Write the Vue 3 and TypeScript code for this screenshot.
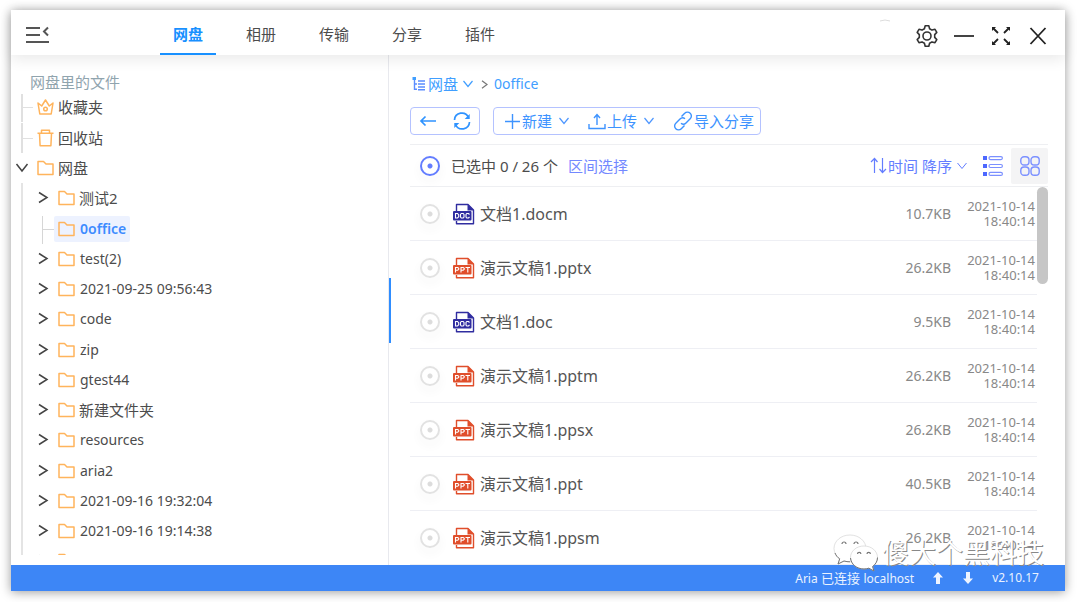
<script setup lang="ts">
import { ref } from 'vue'

interface FolderNode {
  name: string
  cjk?: boolean
  leaf?: boolean
}

interface FileItem {
  name: string
  type: 'DOC' | 'PPT'
  size: string
}

const tabs = ['网盘', '相册', '传输', '分享', '插件']
const activeTab = ref('网盘')
const activeFolder = ref('0office')

const folders: FolderNode[] = [
  { name: '测试2', cjk: true },
  { name: '0office', leaf: true },
  { name: 'test(2)' },
  { name: '2021-09-25 09:56:43' },
  { name: 'code' },
  { name: 'zip' },
  { name: 'gtest44' },
  { name: '新建文件夹', cjk: true },
  { name: 'resources' },
  { name: 'aria2' },
  { name: '2021-09-16 19:32:04' },
  { name: '2021-09-16 19:14:38' },
  { name: '' },
]

const files: FileItem[] = [
  { name: '文档1.docm', type: 'DOC', size: '10.7KB' },
  { name: '演示文稿1.pptx', type: 'PPT', size: '26.2KB' },
  { name: '文档1.doc', type: 'DOC', size: '9.5KB' },
  { name: '演示文稿1.pptm', type: 'PPT', size: '26.2KB' },
  { name: '演示文稿1.ppsx', type: 'PPT', size: '26.2KB' },
  { name: '演示文稿1.ppt', type: 'PPT', size: '40.5KB' },
  { name: '演示文稿1.ppsm', type: 'PPT', size: '26.2KB' },
]
</script>

<template>
  <div class="page">
    <div class="window">
      <header class="header">
        <button class="menu" aria-label="折叠菜单">
          <svg width="24" height="18" viewBox="0 0 24 18" fill="none" stroke="#555" stroke-width="2">
            <path d="M0 2h14M0 9h14M0 16h23" /><path d="M22 1.500l-4 4 4 4" />
          </svg>
        </button>
        <nav class="tabs">
          <button
            v-for="t in tabs" :key="t" class="tab" :class="{ active: t === activeTab }"
            @click="activeTab = t"
          >{{ t }}</button>
        </nav>
        <div class="controls">
          <svg class="speck" width="10" height="3" viewBox="0 0 10 3" fill="none" stroke="#ddd"><path d="M0 2Q5 0 10 2" /></svg>
          <button aria-label="设置">
            <svg width="24" height="24" viewBox="0 0 24 24" fill="none" stroke="#333" stroke-width="1.6" stroke-linejoin="round">
              <path d="M10.2 1.8h3.6l.8 2.9 2.4 1.4 3-.8 1.8 3.1-2.1 2.2v2.8l2.1 2.2-1.8 3.1-3-.8-2.4 1.4-.8 2.9h-3.6l-.8-2.9L7 17.9l-3 .8-1.8-3.1 2.1-2.2v-2.8L2.2 8.4 4 5.3l3 .8 2.4-1.4z" />
              <circle cx="12" cy="12" r="4" />
            </svg>
          </button>
          <button aria-label="最小化">
            <svg width="20" height="20" viewBox="0 0 20 20" stroke="#444" stroke-width="2"><path d="M0 10h20" /></svg>
          </button>
          <button aria-label="最大化">
            <svg width="20" height="20" viewBox="0 0 20 20" fill="none" stroke="#222" stroke-width="1.8">
              <path d="M2 2l5 5M18 2l-5 5M2 18l5-5M18 18l-5-5" />
              <path d="M1 1h4L1 5zM19 1h-4l4 4zM1 19h4l-4-4zM19 19h-4l4-4z" fill="#222" stroke="none" />
            </svg>
          </button>
          <button aria-label="关闭">
            <svg width="18" height="18" viewBox="0 0 18 18" stroke="#222" stroke-width="1.8"><path d="M1.5 1l15 16M16.5 1l-15 16" /></svg>
          </button>
        </div>
      </header>

      <div class="body">
        <aside class="sidebar">
          <h2 class="caption">网盘里的文件</h2>
          <ul class="tree">
            <li class="node">
              <svg class="branch" width="22" height="30" viewBox="0 0 22 30"><path d="M10 2h2v28h-2zM12 15h10v1H12z" fill="#e0e0e0" /></svg>
              <button class="label cjk">
                <svg width="17" height="18" viewBox="0 0 17 18" fill="none" stroke="#ffb45c" stroke-width="1.500" stroke-linejoin="round">
                  <path d="M1 5l1.800 11h11.400L16 5l-3.700 3L8.500 2 4.700 8z" /><circle cx="8.500" cy="11" r="1.800" />
                </svg>收藏夹
              </button>
            </li>
            <li class="node">
              <svg class="branch" width="22" height="30" viewBox="0 0 22 30"><path d="M10 0h2v30h-2zM12 15h10v1H12z" fill="#e0e0e0" /></svg>
              <button class="label cjk">
                <svg width="17" height="18" viewBox="0 0 17 18" fill="none" stroke="#ffb45c" stroke-width="1.500" stroke-linejoin="round">
                  <path d="M.5 4.200h16M4.500 4V1.200h8V4M2.500 4.500l.6 12.300h10.800l.6-12.300" />
                </svg>回收站
              </button>
            </li>
            <li class="node">
              <button class="toggle" aria-label="折叠">
                <svg width="14" height="12" viewBox="0 0 14 12" fill="none" stroke="#444" stroke-width="1.500"><path d="M1.500 2L7 9l5.500-7" /></svg>
              </button>
              <button class="label cjk">
                <svg width="17" height="18" viewBox="0 0 17 18" fill="none" stroke="#ffb45c" stroke-width="1.500" stroke-linejoin="round"><path d="M1 2.500h5.500L9 5h7v10.500H1z" /></svg>网盘
              </button>
            </li>
          </ul>
          <ul class="tree children">
            <li v-for="f in folders" :key="f.name" class="node">
              <svg v-if="f.leaf" class="branch" width="22" height="30" viewBox="0 0 22 30"><path d="M10 2h1v28h-1zM11 15h11v1H11z" fill="#d6d6d6" /></svg>
              <button v-else class="toggle" aria-label="展开">
                <svg width="12" height="14" viewBox="0 0 12 14" fill="none" stroke="#444" stroke-width="1.500"><path d="M2 1.500L10 6.500l-8 5" /></svg>
              </button>
              <button
                class="label" :class="{ cjk: f.cjk, selected: f.name === activeFolder }"
                @click="activeFolder = f.name"
              >
                <svg width="17" height="18" viewBox="0 0 17 18" fill="none" stroke="#ffb45c" stroke-width="1.500" stroke-linejoin="round"><path d="M1 2.500h5.500L9 5h7v10.500H1z" /></svg>{{ f.name }}
              </button>
            </li>
          </ul>
        </aside>
        <div class="splitter"><span class="grip"></span></div>

        <main class="content">
          <nav class="crumbs">
            <button class="crumb">
              <svg width="14" height="14" viewBox="0 0 14 14" fill="none" stroke="#5b8cff" stroke-width="1.400">
                <path d="M2.500 2v10.300H5M2.500 7H5M6 4h7M6 7h7M6 10h7M6 12.700h7" /><path d="M.5 0h3.500v3H.5z" fill="#409eff" stroke="none" />
              </svg>
              网盘
              <svg class="caret" width="10" height="8" viewBox="0 0 10 8" fill="none" stroke="#409eff" stroke-width="1.200"><path d="M.5 1L5 6.500 9.500 1" /></svg>
            </button>
            <svg width="7" height="9" viewBox="0 0 7 9" fill="none" stroke="#777" stroke-width="1.200"><path d="M1 .8l5 3.700-5 3.700" /></svg>
            <a class="last" href="#">0office</a>
          </nav>

          <div class="toolbar">
            <div class="group nav">
              <button aria-label="返回">
                <svg width="18" height="18" viewBox="0 0 18 18" fill="none" stroke="#2f93ff" stroke-width="1.700"><path d="M17 9H2M6.500 4.500L2 9l4.500 4.500" /></svg>
              </button>
              <button aria-label="刷新">
                <svg width="18" height="18" viewBox="0 0 18 18" fill="none" stroke="#2f93ff" stroke-width="1.700">
                  <path d="M1.500 8A7.300 7.300 0 0 1 15.500 5.500M16.500 10A7.300 7.300 0 0 1 2.500 12.500" />
                  <path d="M16.700 2v5h-5zM1.300 16v-5h5z" fill="#2f93ff" stroke="none" />
                </svg>
              </button>
            </div>
            <div class="group actions">
              <button>
                <svg width="17" height="17" viewBox="0 0 17 17" stroke="#3d93ff" stroke-width="1.400"><path d="M8.500 1v15M1 8.500h15" /></svg>新建
                <svg class="caret" width="10" height="8" viewBox="0 0 10 8" fill="none" stroke="#4d96ff" stroke-width="1.200"><path d="M.5 1L5 6.500 9.500 1" /></svg>
              </button>
              <button>
                <svg width="18" height="17" viewBox="0 0 18 17" fill="none" stroke="#3d93ff" stroke-width="1.400"><path d="M1 11v4.500h16V11M9 12V2.500M6 5l3-3.500L12 5" /></svg>上传
                <svg class="caret" width="10" height="8" viewBox="0 0 10 8" fill="none" stroke="#4d96ff" stroke-width="1.200"><path d="M.5 1L5 6.500 9.500 1" /></svg>
              </button>
              <button>
                <svg width="20" height="20" viewBox="0 0 20 20" fill="none" stroke="#3d93ff" stroke-width="1.400">
                  <path d="M8.500 5.500l3.200-3.200a3.700 3.700 0 0 1 5.500 0 3.700 3.700 0 0 1 0 5.400L13 12a3.700 3.700 0 0 1-5 .3" />
                  <path d="M11.500 14.500l-3.200 3.200a3.700 3.700 0 0 1-5.500 0 3.700 3.700 0 0 1 0-5.400L7 8a3.700 3.700 0 0 1 5-.3" />
                </svg>导入分享
              </button>
            </div>
          </div>

          <div class="selection">
            <input id="pick-all" class="pick all" type="checkbox" aria-label="全选">
            <label for="pick-all">已选中 0 / 26 个</label>
            <button class="range">区间选择</button>
            <button class="sort">
              <svg width="17" height="17" viewBox="0 0 17 17" fill="none" stroke="#637dff" stroke-width="1.200"><path d="M4.500 16V1.500M1 5l3.500-3.500L7.500 5M12.500 1v14.500M9.500 12l3 3.500L16 12" /></svg>时间 降序
              <svg class="caret" width="10" height="8" viewBox="0 0 10 8" fill="none" stroke="#637dff"><path d="M.5 1L5 6.500 9.500 1" /></svg>
            </button>
            <button class="view" aria-label="列表视图">
              <svg width="20" height="20" viewBox="0 0 20 20" fill="none" stroke="#7b90ff" stroke-width="1.200">
                <path d="M0 0h4v4H0zM0 8h4v4H0zM0 16h4v4H0z" fill="#4d68ff" stroke="none" />
                <rect x="6" y=".6" width="13.400" height="3" rx="1.500" /><rect x="6" y="8.500" width="13.400" height="3" rx="1.500" /><rect x="6" y="16.400" width="13.400" height="3" rx="1.500" />
              </svg>
            </button>
            <button class="view on" aria-label="网格视图">
              <svg width="20" height="20" viewBox="0 0 20 20" fill="none" stroke="#7b90ff" stroke-width="1.400">
                <rect x=".8" y=".8" width="8.200" height="8.200" rx="3.300" /><rect x="11" y=".8" width="8.200" height="8.200" rx="3.300" />
                <rect x=".8" y="11" width="8.200" height="8.200" rx="3.300" /><rect x="11" y="11" width="8.200" height="8.200" rx="3.300" />
              </svg>
            </button>
          </div>

          <div class="listing">
            <ul class="files">
              <li v-for="f in files" :key="f.name" class="file">
                <input class="pick" type="checkbox" :aria-label="f.name">
                <svg class="kind" :class="f.type.toLowerCase()" width="22" height="22" viewBox="0 0 22 22">
                  <path d="M3.500 8V1.500H15L20.500 7v13.800h-17V18" fill="none" stroke="currentColor" stroke-width="1.400" stroke-linejoin="round" />
                  <path d="M14.500 1l6.500 6.500h-6.500z" fill="currentColor" />
                  <rect x="0" y="8" width="18.500" height="9.500" rx="1" fill="currentColor" />
                  <g fill="none" stroke="#fff" stroke-width="1.100">
                    <path v-if="f.type === 'DOC'" d="M2.500 10.500v4.500h2l1.200-1.200v-2.100l-1.200-1.200zM8.300 10.500h1.900l.8.900v2.700l-.8.900H8.300l-.8-.9v-2.700zM16.500 11.500l-1-1h-1.700l-.8.900v2.700l.8.900h1.700l1-1" />
                    <path v-else d="M2.500 15.500v-5h2.200l1 .8v1l-1 .9H2.500M8 15.500v-5h2.200l1 .8v1l-1 .9H8M12.500 10.500h4.500M14.800 10.500v5" />
                  </g>
                </svg>
                <span class="name">{{ f.name }}</span>
                <span class="size">{{ f.size }}</span>
                <time class="date">2021-10-14<br>18:40:14</time>
              </li>
            </ul>
            <div class="scrollbar"></div>
          </div>
        </main>
      </div>

      <footer class="status">
        <span class="aria"><small>Aria</small> 已连接 <small>localhost</small></span>
        <svg width="12" height="12" viewBox="0 0 12 12" fill="#eef4ff"><path d="M6 0l5 5.500H8V12H4V5.500H1z" /></svg>
        <svg width="12" height="12" viewBox="0 0 12 12" fill="#eef4ff"><path d="M6 12l5-5.500H8V0H4v6.500H1z" /></svg>
        <small>v2.10.17</small>
      </footer>

      <div class="watermark">
        <svg width="46" height="38" viewBox="0 0 46 38" fill="#fff" stroke="#ccc" stroke-width=".6">
          <path d="M17 1C8 1 1 7 1 14.500c0 4.200 2.200 7.900 5.700 10.300L5 30l6-3c2 .6 4 .8 6 .8 8.500 0 16-6 16-13.300S26 1 17 1z" />
          <path d="M31 12c-7.500 0-13.500 5-13.500 11.500S23.500 35 31 35c1.700 0 3.300-.3 4.800-.8L41 37l-1.400-4.500c3-2.100 4.900-5.300 4.900-9C44.500 17 38.500 12 31 12z" />
          <g fill="none" stroke="#777" stroke-width="1.200"><path d="M9 10a2 2 0 0 1 4 0M21 10a2 2 0 0 1 4 0M24.500 20a1.700 1.700 0 0 1 3.400 0M34 20a1.700 1.700 0 0 1 3.400 0" /></g>
          <path d="M17.500 24c.5 6 6 11 13.500 11 1.700 0 3.300-.3 4.800-.8L41 37l-1.400-4.500c3-2.100 4.900-5.300 4.900-9M2 19c1 2.500 2.500 4.500 4.700 5.800L5 30l6-3c2 .6 4 .8 6 .8" fill="none" stroke="#777" stroke-width="1" />
        </svg>
        <span>傻大个黑科技</span>
      </div>
    </div>
  </div>
</template>

<style>
body {
  margin: 0;
  background: #fff;
}
</style>

<style scoped>
* {
  box-sizing: border-box;
}
.page {
  height: 100vh;
  padding: 10px 15px 11px 11px;
  font: 15px/20px "Noto Sans", "Noto Sans CJK SC", sans-serif;
  color: #4c4c4c;
}
button {
  display: flex;
  align-items: center;
  justify-content: center;
  margin: 0;
  padding: 0;
  border: 0;
  background: none;
  font: inherit;
  color: inherit;
  white-space: nowrap;
  cursor: pointer;
}
svg {
  flex: none;
}
small {
  font-size: 12px;
}
ul {
  list-style: none;
  margin: 0;
  padding: 0;
}
.window {
  position: relative;
  display: flex;
  flex-direction: column;
  height: 100%;
  background: #fff;
  box-shadow: 0 1px 10px rgba(0, 0, 0, 0.4);
}
.header {
  display: flex;
  flex: none;
  height: 45px;
  padding: 0 9px 0 15px;
  background: #fff;
  box-shadow: 0 4px 14px rgba(0, 0, 0, 0.09);
  z-index: 1;
}
.menu {
  padding-top: 5px;
}
.tabs {
  display: flex;
  gap: 17px;
  margin-left: 110px;
}
.tab {
  width: 56px;
  padding-top: 4px;
  border-bottom: 2px solid transparent;
}
.tab.active {
  color: #1890ff;
  border-color: #1890ff;
  font-weight: 600;
}
.controls {
  position: relative;
  display: flex;
  margin-left: auto;
}
.controls button {
  width: 37px;
  padding-top: 6px;
}
.speck {
  position: absolute;
  left: -28px;
  top: 9px;
}
.body {
  display: flex;
  flex: 1;
  min-height: 0;
}
.sidebar {
  display: flex;
  flex: none;
  flex-direction: column;
  width: 36%;
  max-width: 377px;
  padding: 18px 0 10px;
}
.caption {
  flex: none;
  margin: 0 0 0 19px;
  font-size: 15px;
  line-height: 19px;
  font-weight: 400;
  color: #90a4ae;
}
.tree {
  flex: none;
}
.tree.children {
  flex: 1;
  min-height: 0;
  overflow: hidden;
  margin-left: 10px;
  padding-left: 9px;
  border-left: 2px solid #e4e4e4;
}
.node {
  display: flex;
  align-items: center;
  height: 30px;
}
.node:nth-child(4n + 2) {
  height: 31px;
}
.toggle {
  width: 22px;
  height: 26px;
}
.label {
  gap: 5px;
  height: 26px;
  padding: 0 4px;
  border-radius: 2px;
  font-size: 14px;
}
.label.cjk {
  gap: 4px;
  font-size: 15px;
}
.label.selected {
  background: #edf2ff;
  color: #3d8bff;
  font-weight: 600;
}
.splitter {
  display: flex;
  flex: none;
  align-items: center;
  width: 4px;
  border-left: 1px solid #e8e9ee;
}
.grip {
  width: 2px;
  height: 65px;
  background: #2f8dff;
}
.content {
  display: flex;
  flex-direction: column;
  flex: 1;
  min-width: 0;
  padding: 18px 17px 0 18px;
}
.crumbs {
  display: flex;
  align-items: center;
  gap: 6px;
  height: 22px;
  padding-left: 2px;
  color: #409eff;
}
.crumb {
  gap: 2px;
}
.crumb .caret {
  margin: 0 2px 0 3px;
}
.last {
  font-size: 14px;
  color: inherit;
  text-decoration: none;
}
.toolbar {
  display: flex;
  gap: 13px;
  margin: 12px 0 9px;
}
.group {
  display: flex;
  align-items: center;
  height: 28px;
  border: 1px solid #b4c2ff;
  border-radius: 4px;
  color: #3d93ff;
}
.group.nav {
  gap: 16px;
  padding: 0 8px;
}
.group.actions {
  gap: 19px;
  padding: 0 6px 0 10px;
}
.group .caret {
  margin-left: 6px;
}
.actions button {
  gap: 1px;
}
.selection {
  display: flex;
  align-items: center;
  flex: none;
  height: 43px;
  padding-left: 10px;
  border: solid #eeeff2;
  border-width: 1px 0;
}
.pick {
  appearance: none;
  flex: none;
  width: 20px;
  height: 20px;
  margin: 0;
  border: 2px solid #e2e2e2;
  border-radius: 50%;
  background: radial-gradient(circle, #dcdcdc 2px, transparent 3px);
  box-shadow: 0 5px 7px 4px rgba(0, 0, 0, 0.015);
}
.pick.all {
  border-color: #637dff;
  background: radial-gradient(circle, #637dff 2px, transparent 3px);
}
.selection label {
  margin-left: 11px;
}
.range {
  margin-left: 10px;
  color: #7388ff;
}
.sort {
  margin-left: auto;
  margin-right: 7px;
  color: #637dff;
  gap: 1px;
}
.sort .caret {
  margin-left: 4px;
}
.view {
  width: 37px;
  height: 36px;
  border-radius: 2px;
}
.view.on {
  background: #f4f4f5;
}
.listing {
  display: flex;
  flex: 1;
  min-height: 0;
}
.files {
  flex: 1;
  min-width: 0;
  overflow: hidden;
}
.file {
  display: flex;
  align-items: center;
  height: 54px;
  padding: 0 2px 0 10px;
  border-bottom: 1px solid #eeeff4;
}
.kind {
  margin: 0 5px 0 13px;
}
.kind.doc {
  color: #302da0;
}
.kind.ppt {
  color: #e04e2b;
}
.name {
  flex: 1;
  font-size: 16px;
  color: #555;
}
.size {
  font-size: 14px;
  color: #888;
}
.date {
  width: 84px;
  text-align: right;
  font-size: 13px;
  line-height: 15px;
  color: #888;
}
.scrollbar {
  width: 11px;
  height: 97px;
  border-radius: 6px;
  background: #c6c6c6;
}
.status {
  display: flex;
  flex: none;
  align-items: center;
  justify-content: flex-end;
  gap: 18px;
  height: 26px;
  padding-right: 26px;
  background: #3d86f6;
  color: #eaf2ff;
  font-size: 13px;
}
.watermark {
  position: absolute;
  right: 21px;
  bottom: 19px;
  display: flex;
  align-items: center;
  gap: 3px;
  font-size: 27px;
  line-height: 36px;
  color: #fff;
  text-shadow: 1px 1px 0 #888;
  pointer-events: none;
}
</style>
